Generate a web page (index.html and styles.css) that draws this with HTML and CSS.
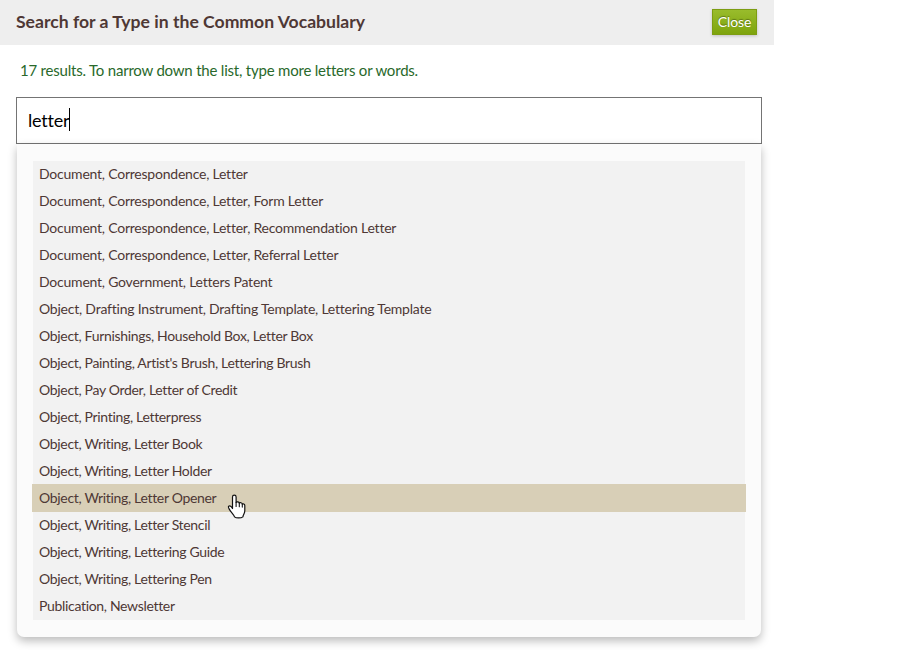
FILE: index.html
```html
<!DOCTYPE html>
<html lang="en">
<head>
<meta charset="utf-8">
<title>Search for a Type in the Common Vocabulary</title>
<link rel="stylesheet" href="styles.css">
</head>
<body>
<div class="dialog">
  <header class="bar">
    <h1 class="title">Search for a Type in the Common Vocabulary</h1>
    <button class="close">Close</button>
  </header>
  <main class="content">
    <p class="message">17 results. To narrow down the list, type more letters or words.</p>
    <div class="field"><span class="query">letter</span><span class="caret"></span></div>
    <div class="panel">
      <ul class="results">
        <li>Document, Correspondence, Letter</li>
        <li>Document, Correspondence, Letter, Form Letter</li>
        <li>Document, Correspondence, Letter, Recommendation Letter</li>
        <li>Document, Correspondence, Letter, Referral Letter</li>
        <li>Document, Government, Letters Patent</li>
        <li>Object, Drafting Instrument, Drafting Template, Lettering Template</li>
        <li>Object, Furnishings, Household Box, Letter Box</li>
        <li>Object, Painting, Artist's Brush, Lettering Brush</li>
        <li>Object, Pay Order, Letter of Credit</li>
        <li>Object, Printing, Letterpress</li>
        <li>Object, Writing, Letter Book</li>
        <li>Object, Writing, Letter Holder</li>
        <li class="active">Object, Writing, Letter Opener
          <svg class="pointer" width="19" height="25" viewBox="0 0 19 25"><path d="M5.5 14.5V3a1.8 1.8 0 0 1 3.6 0v5.5c.5-1 3-.8 3.2.7.6-.9 2.9-.6 3 .9.8-.7 2.5-.2 2.5 1.4v5.2c0 2.8-1.6 3.8-1.9 6.2-1.8 1.4-6.7 1.4-8.4 0-.5-2.4-3.6-4.7-5.1-7.5-.8-1.5-1.5-2.5-.7-3.2 1.2-1 2.8.6 3.8 2.3z" fill="#fff" stroke="#111" stroke-width="1.2" stroke-linejoin="round"/><path d="M9.1 8.5v4M12.3 9.2v3.6M15.3 10.1v3" fill="none" stroke="#111" stroke-width="1.1" stroke-linecap="round"/></svg>
        </li>
        <li>Object, Writing, Letter Stencil</li>
        <li>Object, Writing, Lettering Guide</li>
        <li>Object, Writing, Lettering Pen</li>
        <li>Publication, Newsletter</li>
      </ul>
    </div>
  </main>
</div>
</body>
</html>
```
FILE: styles.css
```css
* { box-sizing: border-box; }
body {
  margin: 0;
  height: 650px;
  overflow: hidden;
  background: #fff;
  color: #4e3835;
  font-family: Lato, "Liberation Sans", sans-serif;
}
.dialog { width: 774px; }
.bar {
  display: flex;
  justify-content: space-between;
  align-items: center;
  height: 45px;
  padding: 0 17px 1px 16px;
  background: #eee;
}
.title { margin: 0; font-size: 17.6px; line-height: 24px; font-weight: 700; }
.close {
  width: 45px;
  height: 26px;
  padding: 0;
  border: 1px solid #7d9d12;
  background: linear-gradient(#99bc2c, #7ea40d);
  box-shadow: 0 1px 3px rgba(0, 0, 0, .2);
  color: #fff;
  font: 14px/22px Lato, sans-serif;
  letter-spacing: -.1px;
  text-shadow: 0 -1px 1px rgba(0, 0, 0, .35);
}
.content { padding: 14px 12px 0 16px; }
.message {
  margin: 0 0 16px 4px;
  color: #29692b;
  font-size: 15px;
  line-height: 22px;
  letter-spacing: -.21px;
}
.field {
  display: flex;
  align-items: center;
  height: 47px;
  padding: 0 0 2px 11px;
  border: 1px solid #747474;
  background: #fff;
  color: #000;
  font-size: 18px;
  letter-spacing: -.2px;
}
.caret { width: 1px; height: 23px; background: #000; }
.panel {
  width: 744px;
  height: 493px;
  margin-left: 1px;
  padding: 17px 16px 0;
  border-radius: 0 0 7px 7px;
  background: #fbfbfb;
  box-shadow: 0 4px 10px rgba(0, 0, 0, .27);
}
.results {
  height: 459px;
  margin: 0;
  padding: 0;
  list-style: none;
  background: #f2f2f2;
  font-size: 14px;
  letter-spacing: -.32px;
}
.results li { height: 27px; padding-left: 6px; line-height: 26px; white-space: nowrap; }
.results li:nth-child(-n+6) { letter-spacing: -.22px; }
.results .active {
  position: relative;
  height: 28px;
  margin: -1px -1px 0;
  padding: 1px 0 0 7px;
  background: #d8cfb7;
}
.pointer { position: absolute; left: 195px; top: 10px; }
```
